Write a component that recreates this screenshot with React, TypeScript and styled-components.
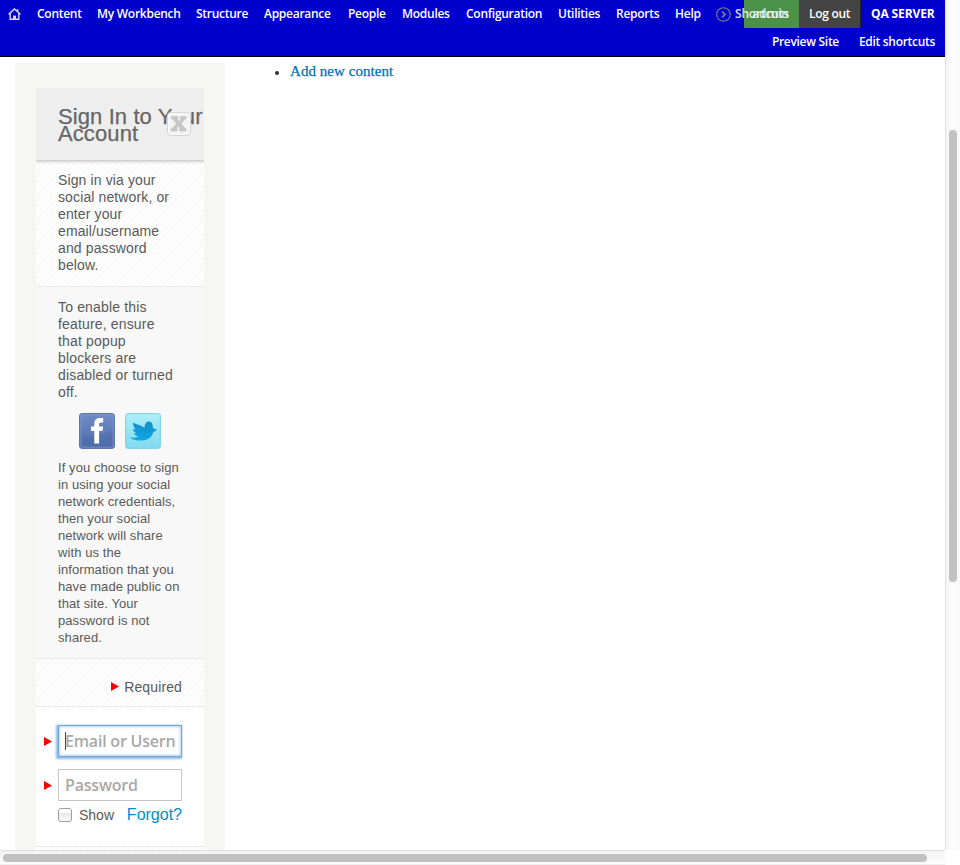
import React from "react";
import styled, { createGlobalStyle } from "styled-components";

const Global = createGlobalStyle`
  * { box-sizing: border-box; }
  html, body { margin: 0; padding: 0; background: #fff; overflow: hidden; }
`;

const Browser = styled.div`
  width: 960px;
  height: 865px;
  display: grid;
  grid-template-columns: 945px 15px;
  grid-template-rows: 850px 15px;
  overflow: hidden;
  font-family: "Liberation Sans", Arial, sans-serif;
  color: #5a5a5a;
`;

const Viewport = styled.div`
  overflow: hidden;
  background: #fff;
`;

const AdminBar = styled.header`
  height: 57px;
  background: #0000cd;
  border-bottom: 1px solid #000;
  font: 600 12px/28px "Open Sans", sans-serif;
  color: #fff;
`;

const PrimaryRow = styled.div`
  display: flex;
  height: 28px;
`;

const HomeLink = styled.a`
  width: 29px;
  padding: 8px 0 0 8px;
  line-height: 0;
`;

const MenuItem = styled.a<{ $w: number }>`
  flex: none;
  width: ${(p) => p.$w + 16}px;
  padding-left: 8px;
  white-space: nowrap;
  letter-spacing: -0.27px;
`;

const ShortcutsLink = styled.a`
  position: relative;
  z-index: 1;
  flex: none;
  display: flex;
  width: 35px;
  padding-left: 7px;
  white-space: nowrap;
  svg { flex: none; margin: 7px 4px 0 0; }
`;

const ShortcutsText = styled.span`
  letter-spacing: -0.2px;
  opacity: 0.85;
`;

const UserTab = styled.a`
  flex: none;
  width: 55px;
  padding-right: 10px;
  text-align: right;
  background: #4b9148;
  color: rgba(255, 255, 255, 0.75);
`;

const LogoutTab = styled.a`
  flex: none;
  width: 62px;
  padding-left: 10px;
  background: #444;
  border-right: 1px solid #222;
  white-space: nowrap;
  letter-spacing: -0.3px;
`;

const ServerName = styled.strong`
  flex: none;
  padding-left: 10px;
  font-weight: 700;
  letter-spacing: -0.12px;
  white-space: nowrap;
`;

const SecondaryRow = styled.div`
  display: flex;
  justify-content: flex-end;
  gap: 20px;
  padding-right: 10px;
  letter-spacing: -0.3px;
`;

const Main = styled.main`
  display: grid;
  grid-template-columns: 210px 1fr;
  column-gap: 49px;
  padding: 6px 0 0 15px;
`;

const Sidebar = styled.aside`
  height: 800px;
  padding: 25px 21px 0;
  background: #f6f7f2;
`;

const Panel = styled.div`
  overflow: hidden;
`;

const ContentList = styled.ul`
  display: flex;
  align-items: center;
  gap: 11px;
  height: 17px;
  margin: 0;
  padding: 0;
  list-style: none;
  font: 15px/17px "Liberation Serif", serif;
  color: #0071b3;
  letter-spacing: 0.05px;
  -webkit-text-stroke: 0.25px #0071b3;
  &::before {
    content: "";
    width: 4px;
    height: 4px;
    margin: 2px 0 0 1px;
    border-radius: 50%;
    background: #333;
  }
`;

const SignInTitle = styled.div`
  position: relative;
  z-index: 1;
  height: 73px;
  padding: 20px 0 0 22px;
  background: #eee;
  border-bottom: 1px solid #d0d0d0;
  box-shadow: 0 1px 3px rgba(0, 0, 0, 0.18);
`;

const Heading = styled.h2`
  margin: 0;
  font-size: 22px;
  font-weight: 400;
  line-height: 17px;
  letter-spacing: 0.1px;
  white-space: nowrap;
  color: #666;
  -webkit-text-stroke: 0.25px #666;
`;

const CloseButton = styled.button`
  position: absolute;
  left: 131px;
  top: 24px;
  width: 24px;
  height: 24px;
  padding: 0;
  border: 1px solid #d5d5d5;
  border-radius: 4px;
  background: #f3f3f3;
  box-shadow: inset 0 0 0 1px #fafafa;
  line-height: 0;
`;

const Section = styled.section<{ $h: number; $top?: number; $tone?: "hatch" | "grey" }>`
  height: ${(p) => p.$h}px;
  padding: ${(p) => p.$top ?? 11}px 0 0 22px;
  border-bottom: 1px solid #e9e9e9;
  background: ${(p) =>
    p.$tone === "grey"
      ? "#f8f8f8"
      : "repeating-linear-gradient(135deg, #fff 0 2.8px, #f9f9f9 2.8px 4.243px)"};
`;

const Copy = styled.p<{ $size: number; $ls: number }>`
  margin: 0;
  font-size: ${(p) => p.$size}px;
  line-height: 17px;
  letter-spacing: ${(p) => p.$ls}px;
  white-space: pre;
  width: 146px;
`;

const SocialButtons = styled.div`
  display: flex;
  gap: 10px;
  padding: 12px 0 10px 21px;
  svg { display: block; }
`;

const Required = styled.div`
  display: flex;
  align-items: center;
  justify-content: flex-end;
  gap: 5px;
  height: 17px;
  padding-right: 22px;
  font-size: 14px;
  letter-spacing: 0.12px;
`;

const LoginForm = styled.form`
  height: 140px;
  padding: 18px 22px 0 8px;
  background: #fff;
  border-bottom: 1px solid #e9e9e9;
`;

const Field = styled.label`
  position: relative;
  display: flex;
  align-items: center;
  gap: 6px;
  height: 32px;
  margin-bottom: 12px;
  svg { flex: none; }
`;

const TextInput = styled.input<{ $active?: boolean }>`
  width: 124px;
  height: 32px;
  padding: 0 6px;
  border: 1px solid ${(p) => (p.$active ? "#75a7d6" : "#c5c5c5")};
  border-radius: 0;
  outline: none;
  background: #fff;
  box-shadow: ${(p) =>
    p.$active ? "-1px 1px 2px 1px #8db8e0, inset 0 0 3px 1px #b9d4ec" : "none"};
  font: 600 16px "Open Sans", sans-serif;
  letter-spacing: -0.2px;
  &::placeholder { color: #a9a9a9; opacity: 1; }
`;

const Caret = styled.i`
  position: absolute;
  left: 21px;
  top: 7px;
  width: 1px;
  height: 18px;
  background: #444;
`;

const Options = styled.div`
  display: flex;
  align-items: center;
  height: 20px;
  margin: -8px 0 0 14px;
  font-size: 14px;
`;

const Checkbox = styled.span`
  width: 14px;
  height: 14px;
  margin-right: 7px;
  border: 1px solid #9c9c9c;
  border-radius: 3px;
  background: linear-gradient(#fff 35%, #e9e9e9 36%, #fafafa);
`;

const Forgot = styled.a`
  margin-left: auto;
  font-size: 16px;
  color: #008ccb;
`;

const VerticalTrack = styled.div`
  padding: 130px 0 0 3px;
  border-left: 1px solid #e2e2e2;
  background: linear-gradient(90deg, #f5f5f5, #fdfdfd 50%, #f8f8f8);
`;

const VerticalThumb = styled.div`
  width: 8px;
  height: 452px;
  border-radius: 4px;
  background: #c1c1c1;
`;

const HorizontalTrack = styled.div`
  padding: 3px 0 0 3px;
  border-top: 1px solid #dedede;
  border-bottom: 1px solid #eee;
  background: linear-gradient(#f3f3f3, #fcfcfc);
`;

const HorizontalThumb = styled.div`
  width: 924px;
  height: 8px;
  border-radius: 4px;
  background: #c1c1c1;
`;

const HomeIcon = () => (
  <svg width="13" height="12" viewBox="0 0 13 12" fill="none" stroke="#d8d8f4" strokeWidth="1.4">
    <path d="M.6 6.3 6.5.9l5.9 5.4M2.2 5v6.3h8.6V5M9.6 3.5V1.2" />
    <path d="M5 11V7.6h3V11z" fill="#d8d8f4" stroke="none" />
  </svg>
);

const ArrowCircle = () => (
  <svg width="15" height="15" viewBox="0 0 15 15" fill="none" stroke="#80808f" strokeWidth="1.1">
    <circle cx="7.5" cy="7.5" r="6.8" />
    <path d="m6 4.7 3 2.8-3 2.8" strokeWidth="1.7" />
  </svg>
);

const RedArrow = () => (
  <svg width="8" height="9" viewBox="0 0 8 9">
    <path d="M0 0 8 4.5 0 9z" fill="#f00" />
  </svg>
);

const CloseIcon = () => (
  <svg width="22" height="22" viewBox="0 0 22 22">
    <path
      d="M3.5 3.5h6.2v2.6h-.6l2.1 2.5L13 6.1h-.6V3.5H18v2.6h-1.2L13.2 10.6l3.7 4.7H18V18h-6.4v-2.7h.7l-1.9-2.4-2 2.4H9V18H3.2v-2.7h1.2l4-4.6-3.6-4.6H3.5z"
      fill="#c7c7c7"
      stroke="#c7c7c7"
      strokeWidth=".7"
    />
  </svg>
);

const Facebook = () => (
  <svg width="36" height="36" viewBox="0 0 36 36">
    <defs>
      <linearGradient id="fbFill" x1="0" y1="0" x2="0" y2="1">
        <stop offset="0" stopColor="#6f8cc5" />
        <stop offset="1" stopColor="#4f6dab" />
      </linearGradient>
    </defs>
    <rect x=".7" y=".7" width="34.6" height="34.6" rx="1.8" fill="url(#fbFill)" stroke="#43609d" strokeWidth="1" />
    <path d="M1.5 23C12 24 25 22 34.5 17v17.5h-33z" fill="#4768aa" opacity=".35" />
    <path d="M1.8 1.8h32.4v32.4H1.8z" fill="none" stroke="#8fa6d3" strokeWidth=".6" />
    <path
      d="M15.3 30.5V18H12v-4.5h3.3v-2.7C15.3 7 17.5 5 21.2 5h3v4.6h-2.1c-1.5 0-2 .7-2 1.9v2h4L23.5 18h-3.4v12.5z"
      fill="#fff"
    />
  </svg>
);

const Twitter = () => (
  <svg width="36" height="36" viewBox="0 0 36 36">
    <defs>
      <linearGradient id="twFill" x1="0" y1="0" x2="0" y2="1">
        <stop offset="0" stopColor="#aeeff9" />
        <stop offset="1" stopColor="#80daf0" />
      </linearGradient>
      <linearGradient id="birdFill" x1="0" y1="0" x2="0" y2="1">
        <stop offset="0" stopColor="#168ccc" />
        <stop offset="1" stopColor="#0ba9e4" />
      </linearGradient>
    </defs>
    <rect x=".7" y=".7" width="34.6" height="34.6" rx="1.8" fill="url(#twFill)" stroke="#70cfe6" />
    <path
      d="M8 9.8c4.2 2.2 8 2.3 11.6 5 .1-3.4 1.4-6 4.2-6.2 1.9-.1 3 1.1 3.5 3 .6 1 .7 2.2.6 3.3l4.4 2-4 2.2c-1.3 5.2-5.3 8.2-10.9 8.4-4.5.2-9.1-.5-12.4-2.8 3.4.2 6.2.1 8.4-1.5-2.4-.3-3.9-1.3-4.2-2.8l2.2-.3c-2.1-.9-3.4-2.3-3.6-4.3 1 .5 1.9.6 2.6.4C8.800 14.500 8.100 12 8 9.800z"
      fill="url(#birdFill)"
    />
  </svg>
);

const menu: [string, number][] = [
  ["Content", 44],
  ["My Workbench", 83],
  ["Structure", 52],
  ["Appearance", 68],
  ["People", 38],
  ["Modules", 48],
  ["Configuration", 76],
  ["Utilities", 42],
  ["Reports", 43],
  ["Help", 26],
];

export default function App() {
  return (
    <Browser>
      <Global />
      <Viewport>
        <AdminBar>
          <PrimaryRow>
            <HomeLink><HomeIcon /></HomeLink>
            {menu.map(([label, width]) => (
              <MenuItem key={label} $w={width}>{label}</MenuItem>
            ))}
            <ShortcutsLink>
              <ArrowCircle />
              <ShortcutsText>Shortcuts</ShortcutsText>
            </ShortcutsLink>
            <UserTab>admin</UserTab>
            <LogoutTab>Log out</LogoutTab>
            <ServerName>QA SERVER</ServerName>
          </PrimaryRow>
          <SecondaryRow>
            <a>Preview Site</a>
            <a>Edit shortcuts</a>
          </SecondaryRow>
        </AdminBar>
        <Main>
          <Sidebar>
            <Panel>
              <SignInTitle>
                <Heading>Sign In to Your<br />Account</Heading>
                <CloseButton aria-label="Close"><CloseIcon /></CloseButton>
              </SignInTitle>
              <Section $h={126} $tone="hatch">
                <Copy $size={14} $ls={0.12}>
                  {"Sign in via your\nsocial network, or\nenter your\nemail/username\nand password\nbelow."}
                </Copy>
              </Section>
              <Section $h={372} $top={12} $tone="grey">
                <Copy $size={14} $ls={0.16}>
                  {"To enable this\nfeature, ensure\nthat popup\nblockers are\ndisabled or turned\noff."}
                </Copy>
                <SocialButtons>
                  <Facebook />
                  <Twitter />
                </SocialButtons>
                <Copy $size={13} $ls={0.08}>
                  {"If you choose to sign\nin using your social\nnetwork credentials,\nthen your social\nnetwork will share\nwith us the\ninformation that you\nhave made public on\nthat site. Your\npassword is not\nshared."}
                </Copy>
              </Section>
              <Section $h={48} $top={19} $tone="hatch">
                <Required><RedArrow />Required</Required>
              </Section>
              <LoginForm>
                <Field>
                  <RedArrow />
                  <TextInput $active placeholder="Email or Username" />
                  <Caret />
                </Field>
                <Field>
                  <RedArrow />
                  <TextInput placeholder="Password" />
                </Field>
                <Options>
                  <Checkbox />
                  Show
                  <Forgot>Forgot?</Forgot>
                </Options>
              </LoginForm>
              <Section $h={40} $tone="hatch" />
            </Panel>
          </Sidebar>
          <ContentList>
            <li>Add new content</li>
          </ContentList>
        </Main>
      </Viewport>
      <VerticalTrack><VerticalThumb /></VerticalTrack>
      <HorizontalTrack><HorizontalThumb /></HorizontalTrack>
    </Browser>
  );
}
